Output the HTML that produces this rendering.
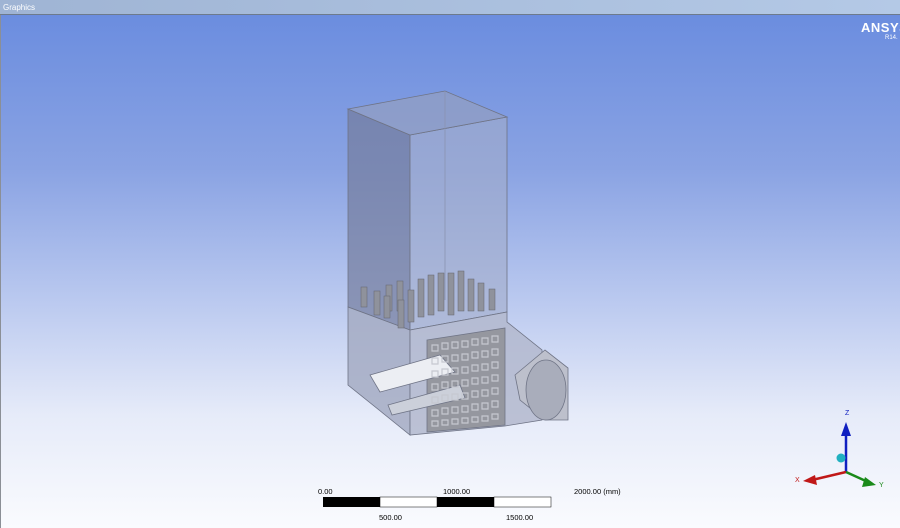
<!DOCTYPE html>
<html><head><style>
body{margin:0;width:900px;height:528px;overflow:hidden;font-family:"Liberation Sans",sans-serif}
#t{position:absolute;left:0;top:0;width:900px;height:15px;background:linear-gradient(90deg,#9fb4d4,#b4c9e6);border-bottom:1px solid #6d7a8c;color:#fff;font-size:8px;line-height:15px;padding-left:3px;box-sizing:border-box}
#v{position:absolute;left:0;top:15px;width:900px;height:513px;background:linear-gradient(180deg,#6b8ddf 0%,#8aa3e3 30%,#b9c8ef 55%,#e6ebf9 78%,#fafbfe 100%);border-left:1px solid #8b8f96;box-sizing:border-box}
.s{position:absolute;font-size:7.5px;color:#000}
</style></head><body>
<div id="t">Graphics</div>
<div id="v"></div>
<div style="position:absolute;left:861px;top:20px;color:#fff;font-weight:bold;font-size:13px;letter-spacing:0.5px">ANSYS</div>
<div style="position:absolute;left:885px;top:35px;color:#fff;font-size:6px">R14.</div>
<svg width="900" height="528" style="position:absolute;left:0;top:0">
<g stroke="#6f7486" stroke-width="0.8">
<polygon points="348,109 410,135 410,330 348,307" fill="#737c9c" fill-opacity="0.7"/>
<polygon points="410,135 507,117 507,312 410,330" fill="#a2acc9" fill-opacity="0.6"/>
<polygon points="348,109 445,91 507,117 410,135" fill="#939ec0" fill-opacity="0.7"/>
<line x1="445" y1="91" x2="445" y2="300" stroke="#8a93b0"/>
<polygon points="348,307 410,330 410,435 348,385" fill="#a4abc3" fill-opacity="0.85"/>
<polygon points="410,330 507,312 507,322 542,350 542,420 505,426 410,435" fill="#b3b9ce" fill-opacity="0.85"/>
<polygon points="427,340 505,328 505,425 427,432" fill="#95979f"/>
<polygon points="370,375 440,355 455,372 380,392" fill="#eceef3"/>
<polygon points="388,405 460,385 465,398 392,415" fill="#ccd0da"/>
<polygon points="515,375 545,350 568,368 568,420 545,420 520,400" fill="#bdc0cc"/>
<ellipse cx="546" cy="390" rx="20" ry="30" fill="#a9adbb"/>
</g>
<g fill="none" stroke="#c6c8d0" stroke-width="1.2">
<path d="M432,345h6v6h-6zM442,343h6v6h-6zM452,342h6v6h-6zM462,341h6v6h-6zM472,339h6v6h-6zM482,338h6v6h-6zM492,336h6v6h-6z"/>
<path d="M432,358h6v6h-6zM442,356h6v6h-6zM452,355h6v6h-6zM462,354h6v6h-6zM472,352h6v6h-6zM482,351h6v6h-6zM492,349h6v6h-6z"/>
<path d="M432,371h6v6h-6zM442,369h6v6h-6zM452,368h6v6h-6zM462,367h6v6h-6zM472,365h6v6h-6zM482,364h6v6h-6zM492,362h6v6h-6z"/>
<path d="M432,384h6v6h-6zM442,382h6v6h-6zM452,381h6v6h-6zM462,380h6v6h-6zM472,378h6v6h-6zM482,377h6v6h-6zM492,375h6v6h-6z"/>
<path d="M432,397h6v6h-6zM442,395h6v6h-6zM452,394h6v6h-6zM462,393h6v6h-6zM472,391h6v6h-6zM482,390h6v6h-6zM492,388h6v6h-6z"/>
<path d="M432,410h6v6h-6zM442,408h6v6h-6zM452,407h6v6h-6zM462,406h6v6h-6zM472,404h6v6h-6zM482,403h6v6h-6zM492,401h6v6h-6z"/>
<path d="M432,421h6v5h-6zM442,420h6v5h-6zM452,419h6v5h-6zM462,418h6v5h-6zM472,417h6v5h-6zM482,416h6v5h-6zM492,414h6v5h-6z"/>
</g>
<g fill="#8f929c" stroke="#62656f" stroke-width="0.5">
<rect x="361" y="287" width="6" height="20"/><rect x="374" y="291" width="6" height="24"/><rect x="386" y="285" width="6" height="26"/><rect x="397" y="281" width="6" height="30"/><rect x="408" y="290" width="6" height="32"/><rect x="418" y="279" width="6" height="38"/><rect x="428" y="275" width="6" height="40"/><rect x="438" y="273" width="6" height="38"/><rect x="448" y="273" width="6" height="42"/><rect x="458" y="271" width="6" height="40"/><rect x="468" y="279" width="6" height="32"/><rect x="478" y="283" width="6" height="28"/><rect x="489" y="289" width="6" height="21"/><rect x="398" y="300" width="6" height="28"/><rect x="384" y="296" width="6" height="22"/>
</g>
<g stroke-width="2.5">
<line x1="846" y1="472" x2="846" y2="432" stroke="#1020c0"/>
<polygon points="841,436 846,422 851,436" fill="#1020c0"/>
<line x1="846" y1="472" x2="812" y2="480" stroke="#c01818"/>
<polygon points="815,475 803,481 817,485" fill="#c01818"/>
<line x1="846" y1="472" x2="868" y2="482" stroke="#1a8a1a"/>
<polygon points="865,477 876,485 862,487" fill="#1a8a1a"/>
</g>
<circle cx="841" cy="458" r="4.5" fill="#20b0c0"/>
<text x="845" y="415" font-size="7" fill="#1020c0" font-family="Liberation Sans">Z</text>
<text x="795" y="482" font-size="7" fill="#c01818" font-family="Liberation Sans">X</text>
<text x="879" y="487" font-size="7" fill="#1a8a1a" font-family="Liberation Sans">Y</text>
<rect x="323" y="497" width="57" height="10" fill="#000"/>
<rect x="380" y="497" width="57" height="10" fill="#fff" stroke="#000" stroke-width="0.5"/>
<rect x="437" y="497" width="57" height="10" fill="#000"/>
<rect x="494" y="497" width="57" height="10" fill="#fff" stroke="#000" stroke-width="0.5"/>
</svg>
<div class="s" style="left:318px;top:487px">0.00</div>
<div class="s" style="left:443px;top:487px">1000.00</div>
<div class="s" style="left:574px;top:487px">2000.00 (mm)</div>
<div class="s" style="left:379px;top:513px">500.00</div>
<div class="s" style="left:506px;top:513px">1500.00</div>
</body></html>
